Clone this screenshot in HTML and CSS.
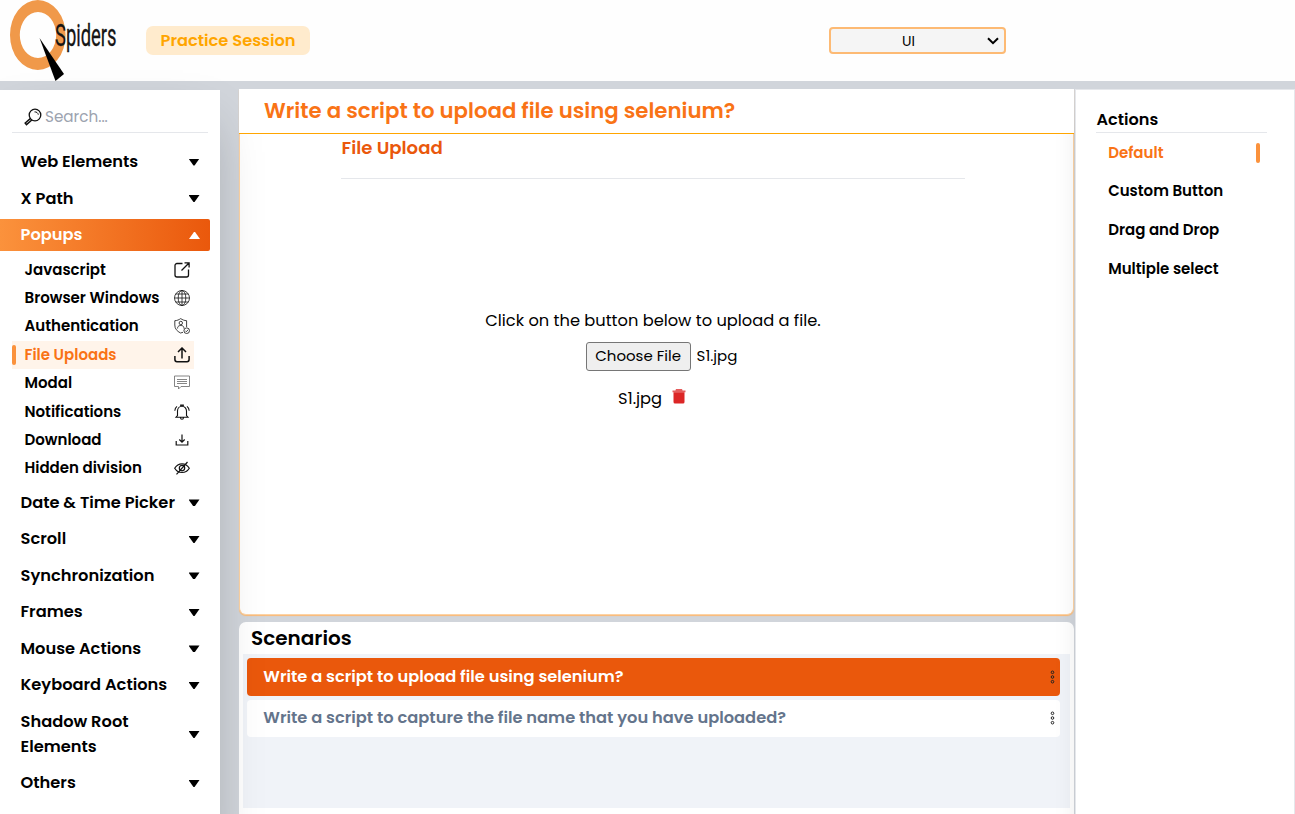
FILE: index.html
```html
<!DOCTYPE html>
<html lang="en">
<head>
<meta charset="utf-8">
<title>QSpiders Practice Session</title>
<link rel="stylesheet" href="styles.css">
</head>
<body>
<header class="header">
  <svg class="logo" width="110" height="81" viewBox="0 0 110 81">
    <path fill="#f0994a" fill-rule="evenodd" d="M0 35a27.800 35 0 0 1 55.600 0a27.800 35 0 0 1-55.600 0ZM9.800 35a18.200 23 0 0 0 36.400 0a18.200 23 0 0 0-36.400 0Z"/>
    <text class="logo-text" x="45" y="46" font-size="32" textLength="61.500" lengthAdjust="spacingAndGlyphs">Spiders</text>
    <path d="M29.500 38 54 74 45.500 81Z" fill="#000"/>
  </svg>
  <div class="badge">Practice Session</div>
  <div class="select"><span>UI</span>
    <svg width="12" height="8" viewBox="0 0 12 8" fill="none" stroke="#000" stroke-width="2"><path d="M1 1.2 6 6.2 11 1.2"/></svg>
  </div>
</header>
<div class="body">
  <aside class="sidebar">
    <div class="search">
      <svg width="18" height="18" viewBox="0 0 18 18" fill="none" stroke="#111" stroke-width="1.3"><circle cx="11" cy="7" r="5.8"/><path d="M10.500 3.900c2-.2 3.500 1 3.800 2.800" stroke-width="1"/><path d="M6.600 10.400 1.200 15l1.300 1.600L7.800 12" stroke-width="1.500"/></svg>
      <span>Search...</span>
    </div>
    <nav class="nav">
      <div class="item"><span>Web Elements</span><i class="caret"></i></div>
      <div class="item"><span>X Path</span><i class="caret"></i></div>
      <div class="item open"><span>Popups</span><i class="caret up"></i></div>
      <div class="sub">
        <div class="link"><span>Javascript</span>
          <svg viewBox="0 0 16 16" stroke-width="1.3"><path d="M8.500 1.500H3A2 2 0 0 0 1 3.500V13a2 2 0 0 0 2 2h9.500a2 2 0 0 0 2-2V7.500M10.500 .9h4.600v4.600M15 1 7.500 8.500"/></svg></div>
        <div class="link"><span>Browser Windows</span>
          <svg viewBox="0 0 16 16" stroke-width=".8"><circle cx="8" cy="8" r="7.500"/><ellipse cx="8" cy="8" rx="3.800" ry="7.500"/><path d="M8 .5v15M.5 8h15M1.700 4h12.600M1.700 12h12.600"/></svg></div>
        <div class="link"><span>Authentication</span>
          <svg viewBox="0 0 16 16" stroke-width=".8"><path d="M9 14.300 6.500 15C3 13 .8 11 .8 7V2.700C3 2.600 5 1.800 6.700.600c1.700 1.200 3.700 2 5.900 2.100V9"/><circle cx="6.800" cy="5" r="1.700"/><path d="M3.600 10.500V9.600C4 8 5.300 7.500 6.800 7.500s2.800.5 3.100 2.100v.9"/><circle cx="12.700" cy="12.700" r="2.800"/><path d="m11.300 12.700 1 1 1.800-1.900"/></svg></div>
        <div class="link active"><span>File Uploads</span>
          <svg viewBox="0 0 16 16" stroke-width="1.5"><path d="M.9 9v3.500A2.200 2.200 0 0 0 3 14.700h10a2.200 2.200 0 0 0 2.100-2.200V9M8 11.500V1.300M4 5l4-4 4 4"/></svg></div>
        <div class="link"><span>Modal</span>
          <svg viewBox="0 0 16 16" stroke-width=".9" class="faint"><path d="M.5 1h15v10.500H7L4.500 14V11.500h-4ZM3 4.500h10M3 6.500h10M3 8.500h10"/></svg></div>
        <div class="link"><span>Notifications</span>
          <svg viewBox="0 0 16 16" stroke-width="1.100"><path d="M6.700 2V1.100h2.600V2M3.500 11.500V7a4.500 4.800 0 0 1 9 0v4.500l1.500 1.700H2ZM6.500 13.400a1.500 1.800 0 0 0 3 0M3 2.400C1.600 3.400.9 5 .8 6.800M13 2.400c1.400 1 2.100 2.600 2.200 4.400"/></svg></div>
        <div class="link"><span>Download</span>
          <svg viewBox="0 0 16 16" stroke-width="1.200"><path d="M2.200 9v4h11.600V9M8 2.500V10M5.300 7.500 8 10.200 10.700 7.500"/></svg></div>
        <div class="link"><span>Hidden division</span>
          <svg viewBox="0 0 16 16" stroke-width="1.200"><path d="M.7 8.200C2.500 5.200 5 3.800 8 3.800s5.500 1.400 7.300 4.400c-1.800 2.900-4.300 4.300-7.300 4.300S2.500 11.100.7 8.200ZM13.500 2 2.500 14.300"/><circle cx="8" cy="8.100" r="2.700"/></svg></div>
      </div>
      <div class="item"><span>Date &amp; Time Picker</span><i class="caret"></i></div>
      <div class="item"><span>Scroll</span><i class="caret"></i></div>
      <div class="item"><span>Synchronization</span><i class="caret"></i></div>
      <div class="item"><span>Frames</span><i class="caret"></i></div>
      <div class="item"><span>Mouse Actions</span><i class="caret"></i></div>
      <div class="item"><span>Keyboard Actions</span><i class="caret"></i></div>
      <div class="item"><span>Shadow Root<br>Elements</span><i class="caret"></i></div>
      <div class="item"><span>Others</span><i class="caret"></i></div>
    </nav>
  </aside>
  <main class="main">
    <section class="task">
      <h1>Write a script to upload file using selenium?</h1>
      <div class="demo">
        <h2>File Upload</h2>
        <div class="upload">
          <p>Click on the button below to upload a file.</p>
          <div class="picker"><button>Choose File</button><span>S1.jpg</span></div>
          <div class="file"><span>S1.jpg</span>
            <svg width="14" height="15" viewBox="0 0 14 15" fill="#dc2626"><path d="M4 0h6l.6 1.500H13.500V3.200H.5V1.500h2.900Z" opacity=".75"/><path d="M1.500 3.200h11V13a1.500 1.500 0 0 1-1.500 1.500H3A1.500 1.500 0 0 1 1.500 13Z"/></svg></div>
        </div>
      </div>
    </section>
    <section class="scenarios">
      <h3>Scenarios</h3>
      <div class="list">
        <div class="row on"><span>Write a script to upload file using selenium?</span>
          <svg class="dots" width="5" height="14" viewBox="0 0 5 14"><circle cx="2.500" cy="2.300" r="1.300"/><circle cx="2.500" cy="7" r="1.300"/><circle cx="2.500" cy="11.700" r="1.300"/></svg></div>
        <div class="row"><span>Write a script to capture the file name that you have uploaded?</span>
          <svg class="dots" width="5" height="14" viewBox="0 0 5 14"><circle cx="2.500" cy="2.300" r="1.300"/><circle cx="2.500" cy="7" r="1.300"/><circle cx="2.500" cy="11.700" r="1.300"/></svg></div>
      </div>
    </section>
  </main>
  <aside class="actions">
    <h4>Actions</h4>
    <ul>
      <li class="current"><span>Default</span><i></i></li>
      <li><span>Custom Button</span></li>
      <li><span>Drag and Drop</span></li>
      <li><span>Multiple select</span></li>
    </ul>
  </aside>
</div>
</body>
</html>
```
FILE: styles.css
```css
* { box-sizing: border-box; }
body { margin: 0; height: 814px; overflow: hidden; background: #d1d5db; color: #000; font: 400 16px/24px Poppins, Inter, sans-serif; display: flex; flex-direction: column; }
h1, h2, h3, h4, p, ul { margin: 0; padding: 0; }
svg { display: block; flex: none; }

.header { height: 81px; flex: none; background: #fefefe; display: flex; align-items: center; padding-left: 10px; }
.logo { overflow: visible; }
.logo-text { font-family: Roboto, sans-serif; fill: #151515; stroke: #151515; stroke-width: .3; }
.badge { margin-left: 26px; width: 164px; height: 29px; line-height: 29px; border-radius: 7px; background: #ffebcd; color: #ffa500; font-size: 16.250px; font-weight: 600; padding-left: 14.500px; }
.select { margin-left: 519px; width: 177px; height: 27px; border: 2px solid #fdba74; border-radius: 4px; background: #f5f5f5; display: flex; align-items: center; padding: 0 5px 0 71px; justify-content: space-between; font-size: 14px; }

.body { flex: 1; min-height: 0; display: flex; align-items: flex-start; padding-top: 8px; }

.sidebar { position: relative; z-index: 1; margin-top: 1px; width: 220px; height: 760px; background: #fff; box-shadow: 0 25px 50px -12px rgba(0, 0, 0, .25); flex: none; }
.search { margin: 10px 12px 0; height: 33px; border-bottom: 1px solid #e5e7eb; display: flex; align-items: center; padding: 2px 0 0 12px; gap: 3px; color: #9ca3af; font-size: 15.200px; }
.nav { padding-top: 13px; }
.item { min-height: 32px; margin-bottom: 4.500px; padding: 3px 10.500px 4px 20.500px; width: 210px; display: flex; align-items: center; justify-content: space-between; font-size: 16.250px; font-weight: 600; line-height: 25px; white-space: nowrap; }
.item.open { background: linear-gradient(to right, #fb923c, #ea580c); color: #fff; border-radius: 0 2px 2px 0; margin-bottom: 0; }
.caret { width: 11px; height: 7px; background: #000; clip-path: polygon(0 0, 100% 0, 55% 100%, 45% 100%); margin-top: 1px; }
.caret.up { background: #fff; transform: rotate(180deg); }
.sub { padding: 4.500px 0 4.300px; margin-left: 12px; width: 182px; }
.link { height: 28.4px; display: flex; align-items: center; justify-content: space-between; padding: 0 4px 0 12.500px; font-size: 15px; font-weight: 600; position: relative; }
.link svg { width: 16px; height: 16px; fill: none; stroke: #111; }
.link svg.faint { stroke: #777; }
.link.active { background: #fff4ea; color: #f97316; }
.link.active::before { content: ""; position: absolute; left: 0; top: 4px; width: 4px; height: 20px; border-radius: 2px; background: #fb923c; }

.main { margin-left: 19px; width: 836px; flex: none; }
.task { height: 526px; width: 835px; background: #fff; border: 1px solid #fdd3a4; border-top: 0; border-radius: 0 0 7px 7px; box-shadow: 0 1px 1px #fdba74; }
.task h1 { position: relative; z-index: 2; margin: 0 -1px; height: 45px; padding: 0 0 0 25px; background: #fff; border-bottom: 1px solid #ffa500; font-size: 21.250px; line-height: 43px; font-weight: 600; color: #f97316; }
.demo { margin-left: 101px; width: 624px; }
.demo h2 { height: 45px; border-bottom: 1px solid #e5e7eb; font-size: 18.100px; font-weight: 600; line-height: 27px; color: #ea580c; padding-left: .6px; }
.upload { padding-top: 130px; display: flex; flex-direction: column; align-items: center; font-size: 16.250px; }
.picker { margin-top: 9px; margin-left: 17px; display: flex; align-items: center; gap: 6px; font-size: 15px; }
.picker span { margin-top: -2px; }
.picker button { width: 105px; height: 29px; padding: 0 0 1px; border: 1px solid #767676; border-radius: 3px; background: #efefef; font: inherit; color: #000; }
.file { margin: 16px 2px 0 0; display: flex; align-items: center; gap: 10px; }
.file svg { margin-top: -5px; }

.scenarios { position: relative; margin-top: 7px; width: 835px; height: 210px; background: #fff; border-radius: 7px 7px 0 0; padding: 0 4px; }
.scenarios h3 { height: 32px; line-height: 32px; padding-left: 8px; font-size: 20px; font-weight: 600; }
.list { height: 154px; background: #f0f3f8; padding: 4px 10px 0 4px; }
.row { height: 37px; margin-bottom: 4px; border-radius: 4px; background: #fff; display: flex; align-items: center; justify-content: space-between; padding: 0 5px 2px 16.300px; font-size: 16.250px; font-weight: 600; color: #64748b; }
.row.on { height: 38px; padding-bottom: 1px; background: #ea580c; color: #fff; }
.dots { fill: none; stroke: #222; stroke-width: 1; margin-top: 1px; }

.actions { position: relative; z-index: 1; width: 220px; height: 760px; background: #fff; border: 1px solid #e5e7eb; box-shadow: 0 20px 25px -5px rgba(0, 0, 0, .12); padding: 17px 27px 0 20px; flex: none; }
.actions h4 { height: 26px; border-bottom: 1px solid #e5e7eb; padding-left: .6px; font-size: 16.100px; line-height: 25px; font-weight: 600; }
.actions ul { list-style: none; padding: 1px 7px 0 12.200px; }
.actions li { height: 38.600px; display: flex; align-items: center; justify-content: space-between; font-size: 15px; font-weight: 600; }
.actions .current { height: 38.200px; color: #f97316; }
.current i { width: 4px; height: 20px; border-radius: 2px; background: #fb923c; }
```
